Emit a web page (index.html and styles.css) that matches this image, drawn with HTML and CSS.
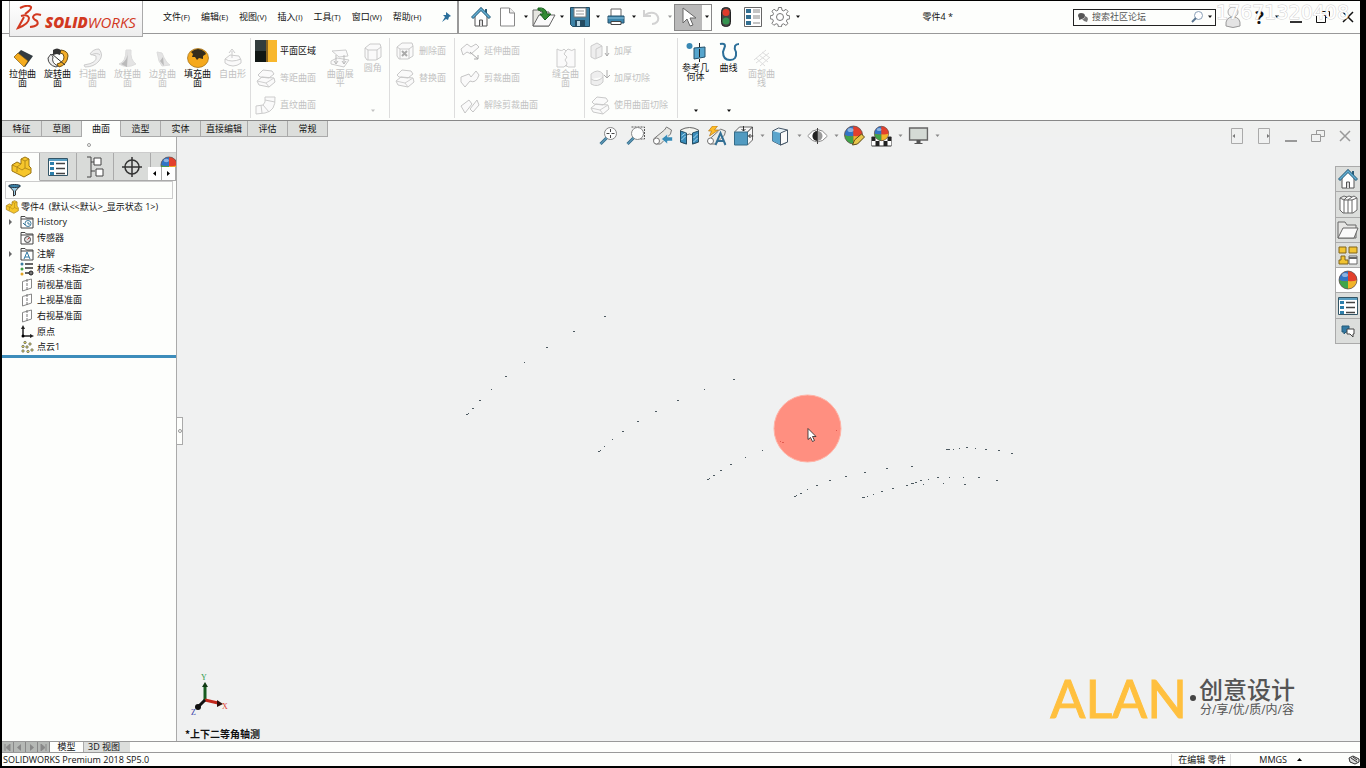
FILE: index.html
```html
<!DOCTYPE html>
<html lang="zh-CN">
<head>
    <meta charset="UTF-8">
    <meta name="viewport" content="width=device-width, initial-scale=1.0">
    <title>SOLIDWORKS - 零件4</title>
    <link rel="stylesheet" href="styles.css">
</head>
<body>
    <!-- shared icons -->
    <svg class="defs" width="0" height="0">
        <symbol id="caret" viewBox="0 0 6 4"><path d="M1 .5h4L3 3z" fill="currentColor"/></symbol>
        <symbol id="plane" viewBox="0 0 14 14"><path d="M2.500 3.500L11.500 1v9L2.500 13z" fill="#fff" stroke="#888" stroke-width="1"/><path d="M7 1v12" stroke="#777" stroke-dasharray="3 1"/></symbol>
        <symbol id="part" viewBox="0 0 22 22"><path d="M2 9l5-3 4 2V3l4-2 4 2v7l2 2v5l-7 4-12-6z" fill="#f6c62b" stroke="#9b7410"/><path d="M11 3l4 2 4-2M15 5v7l-3 2-5-3M15 12l5 2M2 9l5 2v5M7 11l4-3" fill="none" stroke="#a67e14" stroke-width=".8"/></symbol>
        <symbol id="folder" viewBox="0 0 14 14"><path d="M1 3V1.500h4L6.500 3H13v10H1z" fill="#fff" stroke="#444"/><path d="M1 4h12" stroke="#444"/></symbol>
        <symbol id="house" viewBox="0 0 20 20"><path d="M4 9v10h12V9l-6-6z" fill="#fff" stroke="#555"/><path d="M8.500 19v-6h3v6" fill="#ddd" stroke="#555"/><path d="M14 2h2v5h-2z" fill="#2c5d79"/><path d="M1 11l9-9 9 9" fill="none" stroke="#235a78" stroke-width="3"/><path d="M1.500 10.500L10 2l8.500 8.500" fill="none" stroke="#65afd3" stroke-width="1.500"/></symbol>
        <symbol id="ball" viewBox="0 0 20 20"><circle cx="10" cy="10" r="9" fill="#d94b35"/><path d="M10 1a9 9 0 0 0-9 9q4 2 9 1z" fill="#3275c5"/><path d="M10 1a9 9 0 0 1 9 9q-4 2-9 1z" fill="#e3402c"/><path d="M1 10q4 2 9 1v8a9 9 0 0 1-9-9z" fill="#3fa54a"/><path d="M19 10q-4 2-9 1v8a9 9 0 0 0 9-9z" fill="#f1b429"/><circle cx="10" cy="10" r="9" fill="none" stroke="#555" stroke-width=".7"/><ellipse cx="7" cy="5" rx="3" ry="2" fill="#fff" opacity=".45"/></symbol>
        <symbol id="props" viewBox="0 0 20 18"><path d="M.5.5h19v17H.5z" fill="#fff" stroke="#356"/><path d="M1 1h18v2H1z" fill="#5b9fc2"/><path d="M2 4h4v3H2zM2 9h4v3H2zM2 14h4v3H2z" fill="#2d7fab"/><path d="M8 5.500h9M8 10.500h9M8 15.500h9" stroke="#444" stroke-width="1.500"/></symbol>
        <symbol id="sheet" viewBox="0 0 20 20"><path d="M2 7l5-5 9 1 2 3-5 4-9-1zM1 13l5-4 12 1 1 4-6 5-10-2z" fill="#fafafa" stroke="#c9c9c9"/><path d="M1 13l9 2 8-5M10 15l3 4" fill="none" stroke="#d0d0d0"/></symbol>
        <symbol id="box" viewBox="0 0 20 20"><path d="M2 6l5-4h10l1 3v10l-5 3H4L2 15zM2 6l3 2h9v10M14 8l4-3M5 8v10" fill="#fafafa" stroke="#cacaca"/></symbol>
        <symbol id="lens" viewBox="0 0 20 20"><circle cx="12" cy="7.500" r="6" fill="#fcfdfd" stroke="#888"/><path d="M8 12l-6 6" stroke="#356d8c" stroke-width="3"/><path d="M8 12l-6 6" stroke="#78b6d3" stroke-width="1"/></symbol>
        <symbol id="windows" viewBox="0 0 14 12"><path d="M5.500 4V.5h8v6H10M.5 4.500h9v7h-9z" fill="none" stroke="currentColor"/></symbol>
        <symbol id="close" viewBox="0 0 12 12"><path d="M1 1l10 10M11 1L1 11" stroke="currentColor" stroke-width="1.500"/></symbol>
    </svg>

    <div class="app">
        <header class="titlebar">
            <div class="logo">
                <svg width="26" height="25" viewBox="0 0 26 25" fill="none" stroke="#d2381f" stroke-width="2"><path d="M4 3q8-4 11-1 1 2-6 7"/><path d="M5 11q7-2 8 2 0 6-11 10l6-11"/><path d="M25 10q-7-2-8 2 0 2 4 4 3 5-7 6"/></svg>
                <span><b>SOLID</b><i>WORKS</i></span>
            </div>
            <nav class="menu">
                <button>文件<small>(F)</small></button>
                <button>编辑<small>(E)</small></button>
                <button>视图<small>(V)</small></button>
                <button>插入<small>(I)</small></button>
                <button>工具<small>(T)</small></button>
                <button>窗口<small>(W)</small></button>
                <button>帮助<small>(H)</small></button>
            </nav>
            <button class="pin" aria-label="固定"><svg width="10" height="10" viewBox="0 0 10 10"><path d="M5 0l5 4-2 1-1 3-2-1-4 3 3-5-2-2 3 0z" fill="#2b6f9b"/></svg></button>
            <div class="quick">
                <button aria-label="主页"><svg width="20" height="20"><use href="#house"/></svg></button>
                <button aria-label="新建"><svg width="18" height="20" viewBox="0 0 18 20"><path d="M1.500 1h9l5 5v13h-14z" fill="#fff" stroke="#888"/><path d="M10.500 1v5h5" fill="#eee" stroke="#888"/></svg></button>
                <button class="drop" aria-label="更多"><svg width="6" height="4"><use href="#caret"/></svg></button>
                <button aria-label="打开"><svg width="24" height="20" viewBox="0 0 24 20"><path d="M1 19V3h6l2 2h8v14z" fill="#e6e6e0" stroke="#666"/><path d="M1 19L7 8h16l-6 11z" fill="#fafafa" stroke="#666"/><path d="M6 1q8-1 9 6h4l-6 6-5-6h3q0-4-5-4z" fill="#338a34" stroke="#17601c"/></svg></button>
                <button class="drop" aria-label="更多"><svg width="6" height="4"><use href="#caret"/></svg></button>
                <button aria-label="保存"><svg width="20" height="20" viewBox="0 0 20 20"><path d="M.5.5h19v19h-17l-2-2z" fill="#3c81a5" stroke="#244b61"/><path d="M4 1h12v9H4z" fill="#fff" stroke="#777"/><path d="M6 4h8M6 7h8" stroke="#999"/><path d="M5 13h10v6H5z" fill="#244b61"/><path d="M7 14h3v5H7z" fill="#bdd9e6"/></svg></button>
                <button class="drop" aria-label="更多"><svg width="6" height="4"><use href="#caret"/></svg></button>
                <button aria-label="打印"><svg width="18" height="18" viewBox="0 0 18 18"><path d="M4 9V1h10v8" fill="#fff" stroke="#666"/><path d="M1 8h16v7H1z" fill="#3c86ad" stroke="#24516b"/><path d="M1 10h16" stroke="#8fc3dd"/><path d="M4 13.500h10v3H4z" fill="#fff" stroke="#444"/></svg></button>
                <button class="drop" aria-label="更多"><svg width="6" height="4"><use href="#caret"/></svg></button>
                <button aria-label="撤销"><svg width="18" height="18" viewBox="0 0 18 18"><path d="M1 2v6h7M2 7q6-4 11-1 4 4 1 8-2 2-5 2" fill="none" stroke="#d2d2d2" stroke-width="2"/></svg></button>
                <button class="drop pale" aria-label="更多"><svg width="6" height="4"><use href="#caret"/></svg></button>
                <div class="select-tool">
                    <button aria-label="选择"><svg width="16" height="20" viewBox="0 0 16 20"><path d="M2 1v15l4-4 3 7 3-1-3-7h6z" fill="#fff" stroke="#666"/></svg></button>
                    <button class="drop" aria-label="更多"><svg width="6" height="4"><use href="#caret"/></svg></button>
                </div>
                <button aria-label="重建"><svg width="10" height="20" viewBox="0 0 10 20"><rect x=".5" y=".5" width="9" height="19" rx="4" fill="#444" stroke="#222"/><circle cx="5" cy="5.500" r="3.500" fill="#df3a2b"/><circle cx="5" cy="14" r="3.500" fill="#35934f"/></svg></button>
                <button aria-label="文件属性"><svg width="18" height="20" viewBox="0 0 18 20"><path d="M.5.5h17v19H.5z" fill="#fff" stroke="#666"/><path d="M2 2h5v4H2zM2 8h5v4H2zM2 14h5v4H2z" fill="#326f91"/><path d="M9 3h7M9 5h7M9 9h7M9 11h7M9 16h7" stroke="#888"/></svg></button>
                <button aria-label="选项"><svg width="20" height="20" viewBox="0 0 20 20" fill="#fff" stroke="#777"><path d="M8.500.5h3l.5 2.700 1.700.7L16 2.300 18 4.400l-1.600 2.300.7 1.700 2.600.5v3l-2.600.5-.7 1.700L18 16.400l-2.100 2-2.300-1.600-1.700.7-.5 2.300h-3l-.5-2.400-1.700-.7-2.300 1.600-2-2 1.500-2.300-.7-1.700-2.400-.5v-3l2.500-.5.7-1.700L2 4.200l2-2 2.300 1.700 1.700-.7z"/><circle cx="10" cy="10" r="3.500"/></svg></button>
                <button class="drop" aria-label="更多"><svg width="6" height="4"><use href="#caret"/></svg></button>
            </div>
            <div class="doc-title">零件4 *</div>
            <div class="search">
                <svg width="10" height="9" viewBox="0 0 10 9"><path d="M0 3q0-3 3-3 4 0 4 3 0 2-3 3L1 7V5z" fill="#555"/><path d="M7 3q3 1 3 3L9 9 6 8 4 6q3 0 3-3z" fill="#777"/></svg>
                <input type="text" aria-label="搜索社区论坛" placeholder="搜索社区论坛">
                <svg width="12" height="12" viewBox="0 0 12 12"><circle cx="7.500" cy="4.500" r="4" fill="#fff" stroke="#8aa0b8"/><path d="M5 7l-4 4" stroke="#58748f" stroke-width="2"/></svg>
                <svg width="6" height="4"><use href="#caret"/></svg>
            </div>
            <div class="window-tools">
                <button aria-label="登录"><svg width="16" height="22" viewBox="0 0 16 22"><circle cx="8" cy="6" r="5" fill="#f7f7f7" stroke="#aaa"/><path d="M1 20q-1-9 7-9t7 9q-7 3-14 0z" fill="#e4e4e4" stroke="#999"/></svg></button>
                <button class="help">?</button>
                <button class="drop" aria-label="更多"><svg width="6" height="4"><use href="#caret"/></svg></button>
                <button class="low" aria-label="最小化"><svg width="12" height="2"><path d="M0 1h12" stroke="#333" stroke-width="2"/></svg></button>
                <button aria-label="还原"><svg width="14" height="12"><use href="#windows"/></svg></button>
                <button class="exit" aria-label="关闭"><svg width="12" height="12"><use href="#close"/></svg></button>
                <span class="phone">17671320408</span>
            </div>
        </header>

        <section class="ribbon">
            <div class="group group-main">
                <button class="big"><svg width="20" height="20" viewBox="0 0 20 20"><path d="M1 9L8 2l12 6-8 11z" fill="#333b40"/><path d="M1 9l4-4 10 8-4 6z" fill="#f5ac1e" stroke="#7a5710" stroke-width=".6"/></svg>拉伸曲<br>面</button>
                <button class="big"><svg width="22" height="20" viewBox="0 0 22 20"><path d="M14 2q7 1 7 6-1 9-9 11l-2-3q7-2 7-7 0-4-4-4z" fill="#f3ad29" stroke="#6f5011"/><path d="M9 19q-8-2-8-9l3-4 2 3q-2 6 5 9z" fill="#eee" stroke="#444"/><path d="M6 2q4-3 8 0l-1 5-3-1-4 1z" fill="#333"/><path d="M5 6l13 11" stroke="#333"/></svg>旋转曲<br>面</button>
                <button class="big" disabled><svg width="20" height="20" viewBox="0 0 20 20"><path d="M1 17q14-2 12-9l-6-2q3-5 9-5 5 6 0 12-5 6-14 6z" fill="#f0f0f0" stroke="#ccc"/><path d="M8 7q6-3 9 0" fill="none" stroke="#ccc"/></svg>扫描曲<br>面</button>
                <button class="big" disabled><svg width="20" height="20" viewBox="0 0 20 20"><path d="M1 16q7-2 7-14h5q-1 10 5 14-9 5-17 0z" fill="#e4e4e4" stroke="#ddd"/><path d="M3 16q7-4 7-13l-1 16z" fill="#bbb"/></svg>放样曲<br>面</button>
                <button class="big" disabled><svg width="20" height="20" viewBox="0 0 20 20"><path d="M4 4l5 1q4 10 8 12l-8 1-3-5z" fill="#e4e4e4" stroke="#ddd"/><path d="M7 13l3-4 1 9z" fill="#bbb"/></svg>边界曲<br>面</button>
                <button class="big"><svg width="22" height="20" viewBox="0 0 22 20"><ellipse cx="11" cy="10" rx="10.500" ry="9.500" fill="#f5a91d" stroke="#9b6911" stroke-width=".7"/><path d="M4 4q7-6 14 0l1 2-3 2 0 3-4-1-2 2-2-3-3 0 1-3z" fill="#342c1c"/></svg>填充曲<br>面</button>
                <button class="big" disabled><svg width="20" height="20" viewBox="0 0 20 20" fill="#fafafa" stroke="#ccc"><path d="M2 11l5-4 9 1 2 4v3q-8 6-16 0zM2 11q6 4 16 0"/><path d="M9 10V3M6 5l3-4 3 4"/></svg>自由形</button>
            </div>
            <div class="group group-plane">
                <div class="stack">
                    <button><svg width="22" height="22" viewBox="0 0 22 22"><path d="M0 0h12v22H0z" fill="#333d3d"/><path d="M0 11h12v11H0z" fill="#111714"/><path d="M11 0h2v22h-2z" fill="#8a6420"/><path d="M13 0h9v22h-9z" fill="#f8b72c"/></svg>平面区域</button>
                    <button disabled><svg width="22" height="20"><use href="#sheet"/></svg>等距曲面</button>
                    <button disabled><svg width="22" height="20" viewBox="0 0 22 20"><path d="M1 11l7-1q3-2 2-8h10q1 14-10 16l-9 1zM10 5l10 2M8 10l6 7M6 10l1 8" fill="#fafafa" stroke="#ccc"/></svg>直纹曲面</button>
                </div>
                <button class="big" disabled><svg width="20" height="20" viewBox="0 0 20 20"><path d="M2 3l14-1 2 6-9 1zM1 13l6-3 12 2-5 7-13-3z" fill="#fafafa" stroke="#ccc"/><path d="M6 7v9M14 7v9M4 13l2 3 2-3M12 13l2 3 2-3" fill="none" stroke="#bbb"/></svg>曲面展<br>平</button>
                <button class="big high" disabled><svg width="20" height="20"><use href="#box"/></svg>圆角<svg class="more" width="6" height="4"><use href="#caret"/></svg></button>
            </div>
            <div class="group group-face">
                <div class="stack">
                    <button disabled><svg width="20" height="20" viewBox="0 0 20 20"><use href="#box"/><path d="M7 10l5 5M12 10l-5 5" stroke="#aaa" stroke-width="2"/></svg>删除面</button>
                    <button disabled><svg width="20" height="20"><use href="#sheet"/></svg>替换面</button>
                </div>
            </div>
            <div class="group group-trim">
                <div class="stack">
                    <button disabled><svg width="20" height="20" viewBox="0 0 20 20"><path d="M1 8l6-5 4 3 5-3 3 3-8 7-4-2-4 3z" fill="#fafafa" stroke="#c5c5c5"/><path d="M10 11l8 7M18 14v4h-4" fill="none" stroke="#aaa"/></svg>延伸曲面</button>
                    <button disabled><svg width="20" height="20" viewBox="0 0 20 20"><path d="M1 9l8-3 2 3 5-6 3 4q-3 9-9 6l-5 6-4-5z" fill="#fafafa" stroke="#c5c5c5"/></svg>剪裁曲面</button>
                    <button disabled><svg width="20" height="20" viewBox="0 0 20 20"><path d="M1 11l8-6 3 4-7 9zM10 14l7-9 2 5-6 7z" fill="#fafafa" stroke="#c5c5c5"/></svg>解除剪裁曲面</button>
                </div>
                <button class="big" disabled><svg width="20" height="20" viewBox="0 0 20 20"><path d="M1 1q5 3 7 0l2 2 2-2q4 3 7 0v18h-7l-2-2-2 2H1z" fill="#fafafa" stroke="#ccc"/><path d="M10 3l-2 3 3 3-2 3 2 3-1 4" fill="none" stroke="#ccc"/></svg>缝合曲<br>面</button>
            </div>
            <div class="group group-thick">
                <div class="stack">
                    <button disabled><svg width="20" height="20" viewBox="0 0 20 20"><path d="M1 5l6-3 5 3v10l-7 3-4-2zM6 8v9M6 8l6-3" fill="#eee" stroke="#ccc"/><path d="M17 5v10M15 12l2 3 2-3" fill="none" stroke="#aaa"/></svg>加厚</button>
                    <button disabled><svg width="20" height="20" viewBox="0 0 20 20"><path d="M1 6q7-6 12 0v8q-5 6-12 2zM1 11q6 4 12-2" fill="#eee" stroke="#ccc"/><path d="M17 2v8M14 7l3 3 3-3" fill="none" stroke="#aaa"/></svg>加厚切除</button>
                    <button disabled><svg width="20" height="20"><use href="#sheet"/></svg>使用曲面切除</button>
                </div>
            </div>
            <div class="group group-ref">
                <button class="big high"><svg width="20" height="20" viewBox="0 0 20 20"><circle cx="3.500" cy="4" r="3" fill="#3989b4"/><path d="M8 6l11-1v10L8 17z" fill="#56a5cd" stroke="#24516b"/><path d="M13.500 1v4M13.500 7v8M13.500 17v3" stroke="#222"/></svg>参考几<br>何体<svg class="more" width="6" height="4"><use href="#caret"/></svg></button>
                <button class="big high"><svg width="20" height="20" viewBox="0 0 20 20"><path d="M1 2q5-1 5 2-1 3-2 6 0 8 7 8t6-8q-2-3-1-6 1-2 4-2" fill="none" stroke="#2c6f99" stroke-width="2"/></svg>曲线<svg class="more" width="6" height="4"><use href="#caret"/></svg></button>
                <button class="big" disabled><svg width="20" height="20" viewBox="0 0 20 20" fill="none" stroke="#ddd"><path d="M2 12L14 2M4 15L17 5M8 18L18 9M4 10l9 8M7 7l9 7M10 4l8 6"/></svg>面部曲<br>线</button>
            </div>
        </section>

        <nav class="tabs">
            <button>特征</button>
            <button>草图</button>
            <button class="active">曲面</button>
            <button>造型</button>
            <button>实体</button>
            <button class="long">直接编辑</button>
            <button>评估</button>
            <button>常规</button>
        </nav>

        <main class="workspace">
            <aside class="panel">
                <div class="panel-grip"><span class="dot"></span></div>
                <div class="panel-tabs">
                    <button class="active" aria-label="设计树"><svg width="22" height="22"><use href="#part"/></svg></button>
                    <button aria-label="属性"><svg width="20" height="18"><use href="#props"/></svg></button>
                    <button aria-label="配置"><svg width="20" height="22" viewBox="0 0 20 22" fill="#fff" stroke="#444"><path d="M2 1h4v20H2M6 6h4M6 15h4" fill="none"/><path d="M9 2h7v7H9zM11 13h7v7h-7z"/></svg></button>
                    <button aria-label="尺寸"><svg width="20" height="20" viewBox="0 0 20 20" fill="none" stroke="#333" stroke-width="1.500"><circle cx="10" cy="10" r="7"/><path d="M10 0v20M0 10h20"/></svg></button>
                    <button class="cut" aria-label="外观"><svg width="18" height="18"><use href="#ball"/></svg></button>
                    <div class="scroll">
                        <button aria-label="向左"><svg width="3" height="5"><path d="M3 0v5L0 2.500z"/></svg></button>
                        <button aria-label="向右"><svg width="3" height="5"><path d="M0 0v5l3-2.500z"/></svg></button>
                    </div>
                </div>
                <div class="filter">
                    <svg width="13" height="13" viewBox="0 0 13 13"><path d="M1 2l4.500 5v5l2-1V7L12 2z" fill="#9ccbe2" stroke="#333"/><ellipse cx="6.500" cy="2" rx="6" ry="1.500" fill="#3b85aa" stroke="#234"/></svg>
                    <input type="text" aria-label="过滤">
                </div>
                <ul class="tree">
                    <li class="root"><svg width="14" height="14"><use href="#part"/></svg>零件4&nbsp; (默认&lt;&lt;默认&gt;_显示状态 1&gt;)</li>
                    <li class="open"><svg width="14" height="14" viewBox="0 0 14 14"><use href="#folder"/><circle cx="8" cy="8.500" r="3" fill="none" stroke="#3b7a9c"/><path d="M8 7v2h2M3 8l2 2" stroke="#3b7a9c" fill="none"/></svg>History</li>
                    <li><svg width="14" height="14" viewBox="0 0 14 14"><use href="#folder"/><circle cx="7.500" cy="8.500" r="3" fill="#ddd" stroke="#444"/><path d="M7.500 8.500l2-2" stroke="#c33"/></svg>传感器</li>
                    <li class="open"><svg width="14" height="14" viewBox="0 0 14 14"><use href="#folder"/><path d="M4 12L7 5l3 7M5 10h4" fill="none" stroke="#2f79a3"/></svg>注解</li>
                    <li><svg width="14" height="14" viewBox="0 0 14 14"><circle cx="2" cy="2" r="1.500" fill="#3a7d9e"/><circle cx="2" cy="7" r="1.500" fill="#43a047"/><circle cx="2" cy="12" r="1.500" fill="#e3a625"/><path d="M5 2h8M5 6h8M5 11h4" stroke="#333" stroke-width="1.500"/><circle cx="11" cy="11" r="2" fill="#777" stroke="#222"/></svg>材质 &lt;未指定&gt;</li>
                    <li><svg width="14" height="14"><use href="#plane"/></svg>前视基准面</li>
                    <li><svg width="14" height="14"><use href="#plane"/></svg>上视基准面</li>
                    <li><svg width="14" height="14"><use href="#plane"/></svg>右视基准面</li>
                    <li><svg width="14" height="14" viewBox="0 0 14 14"><path d="M3 2v9h9" fill="none" stroke="#222" stroke-width="1.500"/><path d="M3 0L1 4h4zM14 11l-4-2v4z" fill="#222"/><circle cx="3" cy="11" r="1.500"/></svg>原点</li>
                    <li><svg width="14" height="14" viewBox="0 0 14 14" fill="#e8dc52" stroke="#666" stroke-width=".8"><circle cx="5" cy="2.500" r="1.200"/><circle cx="10" cy="4" r="1.200"/><circle cx="3" cy="6.500" r="1.200"/><circle cx="7" cy="7" r="1.200"/><circle cx="3" cy="11" r="1.200"/><circle cx="8" cy="11.500" r="1.200"/><circle cx="12" cy="10" r="1.200"/></svg>点云1</li>
                </ul>
                <div class="rollback"></div>
            </aside>

            <section class="viewport">
                <div class="view-tools">
                    <button aria-label="整屏显示"><svg width="20" height="20" viewBox="0 0 20 20"><use href="#lens"/><path d="M12 3v3M12 9v3M8 7.500h3M13 7.500h3" stroke="#444"/></svg></button>
                    <button aria-label="局部放大"><svg width="20" height="20" viewBox="0 0 20 20"><path d="M6 1h13v12h-4" fill="none" stroke="#555" stroke-dasharray="2 1"/><use href="#lens"/></svg></button>
                    <button aria-label="上一视图"><svg width="20" height="20" viewBox="0 0 20 20"><path d="M1 13L12 4l2-3 5 3-1 4L8 18l-5 0z" fill="#e8e8e4" stroke="#777"/><circle cx="4" cy="15" r="3" fill="#fff" stroke="#777"/><path d="M20 11h-5V8l-6 5 6 5v-3h5z" fill="#378bb6" stroke="#fff" stroke-width=".5"/></svg></button>
                    <button aria-label="剖面视图"><svg width="20" height="20" viewBox="0 0 20 20"><path d="M1 4q9-5 18 0v12l-6 2V9q-3-2-6 0v9l-6-2z" fill="#f3f3ee" stroke="#666"/><path d="M1 5l6 2v11l-6-2zM13 7l6-2v11l-6 2z" fill="#398cba" stroke="#234e66"/><path d="M2 10l4-3M2 14l4-4M14 12l4-4M14 16l4-4" stroke="#a9d5ea"/></svg></button>
                    <button aria-label="动态注解"><svg width="20" height="20" viewBox="0 0 20 20"><path d="M1 15L12 5l2-2 5 2-1 4-9 9H3z" fill="#ecece8" stroke="#777"/><circle cx="4" cy="15" r="3" fill="#fff" stroke="#777"/><path d="M6 0h5L8 4h4l-9 6 2-5H2z" fill="#ffbd27" stroke="#a7680c" stroke-width=".6"/><path d="M9 19l5-12 5 12M11 15h6" fill="none" stroke="#326f94" stroke-width="2"/></svg></button>
                    <button aria-label="视图定向"><svg width="20" height="20" viewBox="0 0 20 20"><path d="M1 6l5-5h13v13l-5 5z" fill="#f6f6f6" stroke="#666"/><path d="M1 6h13v13H1z" fill="#529bc1" stroke="#356c88"/><path d="M10 0v5M8 3l2 2 2-2M20 10h-5M17 8l-2 2 2 2M14 6l5-5" fill="none" stroke="#333"/></svg></button>
                    <button class="drop" aria-label="更多"><svg width="6" height="4"><use href="#caret"/></svg></button>
                    <button aria-label="显示样式"><svg width="20" height="20" viewBox="0 0 20 20"><path d="M2 5l6-3 9 2v12l-7 3-8-4z" fill="#eaf4f8" stroke="#456"/><path d="M2 5l8 2v12l-8-4z" fill="#5ba5cc"/><path d="M10 7l7-3v12l-7 3z" fill="#fafafa" stroke="#456"/></svg></button>
                    <button class="drop" aria-label="更多"><svg width="6" height="4"><use href="#caret"/></svg></button>
                    <button aria-label="隐藏/显示"><svg width="20" height="20" viewBox="0 0 20 20"><path d="M0 10q10-13 20 0-10 12-20 0z" fill="#fff" stroke="#888"/><circle cx="10" cy="10" r="5" fill="#999"/><path d="M10 5a5 5 0 0 0 0 10z" fill="#222"/><path d="M10 2v16" stroke="#444"/></svg></button>
                    <button class="drop" aria-label="更多"><svg width="6" height="4"><use href="#caret"/></svg></button>
                    <button aria-label="编辑外观"><svg width="22" height="22" viewBox="0 0 22 22"><use href="#ball" width="20" height="20"/><path d="M9 20l2-5 7-6 3 3-7 7z" fill="#e9c64b" stroke="#5b4a19"/></svg></button>
                    <button aria-label="应用布景"><svg width="20" height="22" viewBox="0 0 20 22"><path d="M0 12h20v9H0z" fill="#fff" stroke="#333"/><path d="M0 12h4v4H0zM8 12h4v4H8zM16 12h4v4h-4zM4 16h4v5H4zM12 16h4v5h-4z" fill="#222"/><use href="#ball" x="2" width="16" height="17"/></svg></button>
                    <button class="drop" aria-label="更多"><svg width="6" height="4"><use href="#caret"/></svg></button>
                    <button aria-label="视图设定"><svg width="20" height="18" viewBox="0 0 20 18"><path d="M1 1h18v12H1z" fill="#d4dad5" stroke="#666" stroke-width="1.500"/><path d="M8 13h4v3h2v1H6v-1h2z" fill="#555"/></svg></button>
                    <button class="drop" aria-label="更多"><svg width="6" height="4"><use href="#caret"/></svg></button>
                </div>
                <div class="doc-tools">
                    <button aria-label="左"><svg width="14" height="16" viewBox="0 0 14 16"><path d="M1.500.5h11v15h-11z" fill="none" stroke="#aaa"/><path d="M5 6v4L2.500 8z" fill="#777"/></svg></button>
                    <button aria-label="右"><svg width="14" height="16" viewBox="0 0 14 16"><path d="M1.500.5h11v15h-11z" fill="none" stroke="#aaa"/><path d="M10 6v4l2.500-2z" fill="#777"/></svg></button>
                    <button class="low" aria-label="最小化"><svg width="12" height="2"><path d="M0 1h12" stroke="#999" stroke-width="2"/></svg></button>
                    <button aria-label="还原"><svg width="14" height="12"><use href="#windows"/></svg></button>
                    <button aria-label="关闭"><svg width="12" height="12"><use href="#close"/></svg></button>
                </div>

                <!-- point cloud -->
                <svg class="canvas" width="100%" height="100%">
                    <g transform="translate(-177 -136.500)" fill="none" stroke="#4c5960">
                        <path d="M604 316h2M573 331h2M546 347h2M524 362h1M505 376h2M491 389h1M479 400h2M472 408h2M468 413h1M466 414h2"/>
                        <path d="M733 379h2M704 389h1M677 400h2M655 411h2M637 421h2M622 431h2M612 439h1M604 446h1M600 450h1M598 451h2"/>
                        <path d="M762 450h1M745 457h1M730 464h2M720 470h2M713 475h2M709 478h1M707 479h2"/>
                        <path d="M911 466h2M886 468h2M864 472h2M845 476h2M829 480h2M816 485h2M807 489h1M800 493h2M796 495h1M794 496h2"/>
                        <path d="M996 480h2M978 477h2M963 477h1M949 477h1M937 477h2M928 479h1M920 480h2M915 482h2M911 483h3"/>
                        <path d="M964 484h2M943 483h1M923 484h1M906 485h2M892 488h2M881 491h2M873 494h1M867 496h1M862 497h3"/>
                        <path d="M1011 453h2M998 450h2M985 449h2M975 448h1M966 447h2M959 448h1M953 449h1M946 449h4"/>
                        <circle cx="807.500" cy="428" r="33.500" fill="#ff8f80" stroke="#ffb3a6"/>
                        <path d="M782 442h2M780 441h1M836 430h1" stroke="#e05a50"/>
                        <path d="M808 428v11l2.500-2 2 4 2-1-2-4h3.500z" fill="#fff" stroke="#222" stroke-width=".8"/>
                    </g>
                </svg>

                <button class="splitter" aria-label="折叠"><span class="dot"></span></button>

                <nav class="task-pane">
                    <button aria-label="资源"><svg width="20" height="20"><use href="#house"/></svg></button>
                    <button aria-label="设计库"><svg width="20" height="20" viewBox="0 0 20 20" fill="#fff" stroke="#666"><path d="M2 4l4-2 3 1 2-1 3 1 2-1 3 2v12l-4 3-10 0-3-3zM6 6v13M10 6v13M14 6v13M2 4l4 2 3-3M6 6h4l4-3M10 6h4l5-2"/></svg></button>
                    <button aria-label="文件探索器"><svg width="22" height="20" viewBox="0 0 22 20"><path d="M1 18V2h7l2 3h9v13z" fill="#e6e6e4" stroke="#666"/><path d="M1 18L6 8h15l-4 10z" fill="#fafafa" stroke="#666"/></svg></button>
                    <button aria-label="视图调色板"><svg width="20" height="20" viewBox="0 0 20 20"><path d="M1 2h7v6H1zM11 2h8v6h-8zM3 11h4v4h3v4H1v-4h2z" fill="#f2c432" stroke="#81651a"/><path d="M11 11h8v8h-8z" fill="#fff" stroke="#666"/><path d="M11 13h8" stroke="#666" stroke-width="2"/></svg></button>
                    <button class="active" aria-label="外观"><svg width="20" height="20"><use href="#ball"/></svg></button>
                    <button aria-label="自定义属性"><svg width="20" height="18"><use href="#props"/></svg></button>
                    <button aria-label="论坛"><svg width="14" height="14" viewBox="0 0 14 14"><path d="M1 2h7v6H5L3 10V8H1z" fill="#3279a3" stroke="#235a78"/><path d="M6 5h7v5h-1v3L9 10H6z" fill="#fff" stroke="#444"/></svg></button>
                </nav>

                <div class="triad">
                    <svg width="44" height="44" viewBox="0 0 44 44">
                        <path d="M15 28V14" stroke="#175c20" stroke-width="3"/><path d="M12 15l3-5 3 5z" fill="#103b14"/>
                        <path d="M15 28l13 3" stroke="#c2271b" stroke-width="3"/><path d="M27 28l6 4-6 3z" fill="#2b0b08"/>
                        <path d="M15 28l-6 6" stroke="#111" stroke-width="3"/><circle cx="8" cy="35" r="3" fill="#111"/>
                        <text x="11" y="8" fill="#2d9b4b">Y</text><text x="32" y="37" fill="#e03d2c">X</text><text x="1" y="43" fill="#3740a8">Z</text>
                    </svg>
                    <strong>*上下二等角轴测</strong>
                </div>

                <div class="brand">
                    <span class="brand-name">ALAN</span>
                    <span class="brand-dot"></span>
                    <span class="brand-text"><b>创意设计</b><small>分/享/优/质/内/容</small></span>
                </div>
            </section>
        </main>

        <nav class="sheets">
            <div class="sheet-nav">
                <button aria-label="第一页"><svg width="7" height="7"><path d="M1 0v7M6 0v7L2 3.500z" stroke="#888" fill="#888"/></svg></button>
                <button aria-label="上一页"><svg width="7" height="7"><path d="M5 0v7L1 3.500z" fill="#888"/></svg></button>
                <button aria-label="下一页"><svg width="7" height="7"><path d="M2 0v7l4-3.500z" fill="#888"/></svg></button>
                <button aria-label="最后一页"><svg width="7" height="7"><path d="M6 0v7M1 0v7l4-3.500z" stroke="#888" fill="#888"/></svg></button>
            </div>
            <button class="sheet active">模型</button>
            <button class="sheet">3D 视图</button>
        </nav>
        <footer class="status">
            <span class="version">SOLIDWORKS Premium 2018 SP5.0</span>
            <span class="mode">在编辑 零件</span>
            <button class="units">MMGS<svg width="5" height="3"><path d="M0 3h5L2.500 0z"/></svg></button>
            <svg width="12" height="10" viewBox="0 0 12 10"><path d="M1 3l4-2 6 3v3L7 9 2 7z" fill="#ddd" stroke="#333"/><path d="M3 3l6 4M5 2l4 3" stroke="#333"/></svg>
        </footer>
    </div>
</body>
</html>
```
FILE: styles.css
```css
* {
    box-sizing: border-box;
}
body {
    margin: 0;
    background: #000;
    color: #111;
    font: 9px/12px "Open Sans", "Noto Sans CJK SC", sans-serif;
}
button {
    display: flex;
    align-items: center;
    justify-content: center;
    padding: 0;
    border: none;
    background: none;
    color: inherit;
    font: inherit;
    white-space: nowrap;
}
button:disabled {
    color: #c2c2c2;
}
svg {
    display: block;
    flex: none;
}
input {
    min-width: 0;
    flex: 1;
    padding: 0;
    border: none;
    outline: none;
    background: none;
    font: inherit;
}
.defs {
    position: absolute;
}
.app {
    display: flex;
    flex-direction: column;
    height: calc(100vh - 3px);
    margin: 1px 6px 2px 2px;
    background: #fdfefc;
}

/* title bar */
.titlebar {
    display: flex;
    align-items: center;
    height: 33px;
    border-bottom: 1px solid #999;
}
.logo {
    position: relative;
    z-index: 1;
    align-self: flex-start;
    display: flex;
    flex: none;
    width: 134px;
    height: 36px;
    margin-left: 7px;
    padding: 4px 0 0 6px;
    border: 1px solid #aaa;
    border-top: none;
    background: linear-gradient(#fff, #eee);
    color: #d2381f;
}
.logo span {
    padding-top: 7px;
    margin-left: 3px;
    font-size: 15px;
    line-height: 20px;
}
.logo b {
    font-style: italic;
    font-weight: 800;
}
.menu {
    display: flex;
    gap: 11px;
    margin-left: 20px;
}
.menu small {
    font-size: 8px;
}
.pin {
    width: 22px;
    margin-left: 14px;
}
.quick {
    display: flex;
    align-items: center;
    align-self: stretch;
    padding-left: 8px;
    border-left: 2px solid #999;
}
.quick button {
    width: 27px;
}
.quick .drop {
    width: 9px;
}
.quick .pale {
    color: #999;
}
.select-tool {
    display: flex;
    height: 27px;
    border: 1px solid #888;
}
.select-tool button:first-child {
    background: #b9b9b9;
}
.doc-title {
    flex: 1;
    text-align: center;
}
.search {
    display: flex;
    align-items: center;
    gap: 4px;
    width: 143px;
    height: 17px;
    padding: 0 2px 0 4px;
    border: 1px solid #222;
}
.search input::placeholder {
    color: #555;
    opacity: 1;
}
.window-tools {
    position: relative;
    display: flex;
    align-items: center;
    padding-left: 3px;
}
.window-tools button {
    width: 27px;
    height: 24px;
}
.window-tools .drop {
    width: 8px;
    margin-right: 1px;
}
.window-tools .exit {
    width: 24px;
}
.window-tools .help {
    font-size: 18px;
    font-weight: 700;
}
.window-tools .low,
.doc-tools .low {
    align-items: flex-end;
    padding-bottom: 6px;
}
.phone {
    position: absolute;
    top: -4px;
    right: 11px;
    color: #fff;
    font: 19px/22px "DejaVu Sans", sans-serif;
    -webkit-text-stroke: 1px #d0d0d0;
    paint-order: stroke;
}

/* command ribbon */
.ribbon {
    display: flex;
    flex: none;
    height: 87px;
    padding: 4px 0 2px 3px;
    border-bottom: 1px solid #888;
}
.group {
    display: flex;
    border-right: 1px solid #ddd;
}
.group-main {
    width: 246px;
}
.group-plane {
    width: 139px;
    padding-left: 4px;
}
.group-face {
    width: 65px;
    padding-left: 5px;
}
.group-trim {
    width: 130px;
    padding-left: 5px;
}
.group-thick {
    width: 93px;
    padding-left: 5px;
}
.group-ref {
    padding-left: 1px;
    border-right: none;
}
.big {
    position: relative;
    flex-direction: column;
    justify-content: flex-start;
    width: 35px;
    padding-top: 10px;
    line-height: 9px;
}
.high {
    padding-top: 4px;
}
.big > svg:first-child {
    margin-bottom: 1px;
}
.group-plane .big,
.group-ref .big {
    width: 33px;
}
.group-plane .stack {
    width: 70px;
}
.group-trim .stack {
    width: 88px;
}
.more {
    position: absolute;
    bottom: 5px;
}
.stack {
    margin-top: -1px;
}
.stack button {
    height: 27px;
    gap: 3px;
}
.group-face .stack button,
.group-trim .stack button,
.group-thick .stack button {
    gap: 4px;
}

/* ribbon tabs */
.tabs {
    display: flex;
    flex: none;
    height: 16px;
    background: #f0f1f0;
}
.tabs button {
    width: 40px;
    border: 1px solid #aaa;
    border-width: 0 1px 1px 0;
    background: #dcdedc;
}
.tabs .long {
    width: 47px;
}
.tabs .active {
    width: 39px;
    border-bottom-color: #fdfefc;
    background: #fdfefc;
}

/* feature tree */
.workspace {
    display: flex;
    flex: 1;
    min-height: 0;
}
.panel {
    flex: none;
    width: 175px;
    border-right: 1px solid #aaa;
}
.panel-grip {
    display: flex;
    align-items: center;
    justify-content: center;
    height: 16px;
    border-bottom: 1px solid #ccc;
}
.dot {
    width: 4px;
    height: 4px;
    border: 1px solid #999;
    border-radius: 50%;
}
.panel-tabs {
    position: relative;
    display: flex;
    height: 28px;
    padding-left: 1px;
    overflow: hidden;
}
.panel-tabs button {
    flex: none;
    width: 37px;
    border: 1px solid #aaa;
    border-width: 0 1px 1px 0;
    background: #d9dbd9;
}
.panel-tabs .active {
    border-bottom-color: #fdfefc;
    background: #fdfefc;
}
.panel-tabs .cut {
    align-items: flex-start;
    width: 36px;
    padding-top: 3px;
}
.panel-tabs .scroll {
    position: absolute;
    right: 0;
    bottom: 0;
    display: flex;
}
.panel-tabs .scroll button {
    width: 14px;
    height: 14px;
    background: #fff;
}
.filter {
    display: flex;
    height: 18px;
    margin: 0 3px;
    padding: 2px;
    border: 1px solid #ccc;
}
.tree {
    display: grid;
    grid-template-rows: repeat(10, 1fr);
    height: 156px;
    margin: 0;
    padding: 0 0 0 18px;
    list-style: none;
}
.tree li {
    position: relative;
    display: flex;
    align-items: center;
    gap: 3px;
    white-space: nowrap;
}
.tree .root {
    margin-left: -15px;
    gap: 2px;
}
.tree .open::before {
    content: "";
    position: absolute;
    left: -11px;
    border: 3px solid transparent;
    border-left: 3px solid #666;
    border-right: none;
}
.rollback {
    height: 3px;
    background: #3d8dbb;
}

/* graphics area */
.viewport {
    position: relative;
    flex: 1;
    background: #f0f1f1;
}
.view-tools,
.doc-tools {
    position: absolute;
    z-index: 1;
    top: -15px;
    display: flex;
    align-items: center;
    height: 28px;
}
.view-tools {
    left: 50%;
    transform: translateX(-50%);
}
.view-tools button {
    width: 27px;
}
.view-tools .drop {
    width: 10px;
    color: #888;
}
.doc-tools {
    right: 2px;
    color: #999;
}
.doc-tools button {
    width: 27px;
    height: 24px;
}
.canvas {
    position: absolute;
    top: 0;
    left: 0;
}
.splitter {
    position: absolute;
    top: 280px;
    left: -1px;
    width: 7px;
    height: 28px;
    border: 1px solid #aaa;
    background: #fdfefc;
}
.task-pane {
    position: absolute;
    top: 29px;
    right: 0;
    display: grid;
    grid-template-rows: repeat(7, 1fr);
    width: 25px;
    height: 178px;
    border: 1px solid #aaa;
    border-width: 1px 0 0 1px;
}
.task-pane button {
    overflow: hidden;
    border-bottom: 1px solid #aaa;
    background: #dcdedc;
}
.task-pane .active {
    background: #fff;
}
.triad {
    position: absolute;
    bottom: 0;
    left: 8px;
    font: 10px/14px "Noto Sans CJK SC", sans-serif;
}
.triad svg {
    margin: 0 0 11px 5px;
    font: 8px "Liberation Serif", serif;
}
.triad strong {
    display: block;
}
.brand {
    position: absolute;
    right: 65px;
    bottom: 17px;
    display: flex;
    align-items: center;
    color: #555;
}
.brand-name {
    color: #ffc03f;
    font: 52px/52px Lato, sans-serif;
    -webkit-text-stroke: 1px #ffc03f;
}
.brand-dot {
    width: 6px;
    height: 6px;
    margin: 0 3px;
    border-radius: 50%;
    background: #444;
}
.brand-text b {
    display: block;
    font-size: 24px;
    font-weight: 500;
    line-height: 24px;
}
.brand-text small {
    display: block;
    font-size: 12px;
    line-height: 16px;
    text-align: center;
}

/* bottom bars */
.sheets {
    display: flex;
    flex: none;
    height: 12px;
    border: 1px solid #999;
    border-width: 1px 0;
}
.sheets button {
    line-height: 10px;
}
.sheet-nav {
    display: flex;
}
.sheet-nav button {
    width: 12px;
    border-right: 1px solid #888;
    background: #b5b8b5;
}
.sheet {
    width: 46px;
    padding-right: 6px;
    background: #dcdedc;
}
.sheets .active {
    width: 34px;
    padding: 0;
    border-right: 1px solid #aaa;
    background: #fdfefc;
}
.status {
    display: flex;
    align-items: center;
    flex: none;
    height: 13px;
}
.version {
    flex: 1;
    padding-left: 1px;
}
.mode {
    width: 60px;
    padding-left: 6px;
    border: 1px solid #ddd;
    border-width: 0 1px;
}
.units {
    gap: 10px;
    margin: 0 46px 0 28px;
}
```
